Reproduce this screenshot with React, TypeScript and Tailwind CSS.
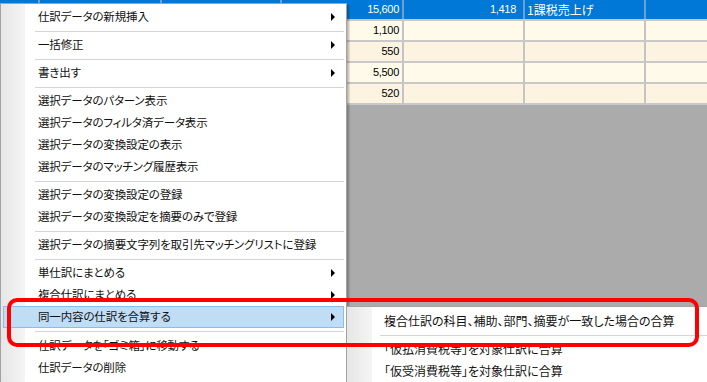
import React from "react";

type Entry = { t: string; arrow?: boolean; hl?: boolean } | "sep" | "sep7";

const items: Entry[] = [
  { t: "仕訳データの新規挿入", arrow: true },
  "sep",
  { t: "一括修正", arrow: true },
  "sep",
  { t: "書き出す", arrow: true },
  "sep",
  { t: "選択データのパターン表示" },
  { t: "選択データのフィルタ済データ表示" },
  { t: "選択データの変換設定の表示" },
  { t: "選択データのマッチング履歴表示" },
  "sep",
  { t: "選択データの変換設定の登録" },
  { t: "選択データの変換設定を摘要のみで登録" },
  "sep",
  { t: "選択データの摘要文字列を取引先マッチングリストに登録" },
  "sep",
  { t: "単仕訳にまとめる", arrow: true },
  { t: "複合仕訳にまとめる", arrow: true },
  { t: "同一内容の仕訳を合算する", arrow: true, hl: true },
  "sep7",
  { t: "仕訳データを「ゴミ箱」に移動する" },
  { t: "仕訳データの削除" },
];

const subItems: Entry[] = [
  { t: "複合仕訳の科目、補助、部門、摘要が一致した場合の合算" },
  "sep",
  { t: "「仮払消費税等」を対象仕訳に合算" },
  { t: "「仮受消費税等」を対象仕訳に合算" },
];

const rows = [
  { a: "15,600", b: "1,418", c: "1課税売上げ", sel: true },
  { a: "1,100", b: "", c: "" },
  { a: "550", b: "", c: "" },
  { a: "5,500", b: "", c: "" },
  { a: "520", b: "", c: "" },
];

function Arrow() {
  return <span className="w-0 h-0 border-y-[4px] border-y-transparent border-l-[4px] border-l-black" />;
}

function Row({ r, i }: { r: (typeof rows)[number]; i: number }) {
  const bg = r.sel ? "bg-[#0078d7] text-white" : i % 2 === 1 ? "bg-[#fffaea] text-black" : "bg-[#fdf3e1] text-black";
  const line = r.sel ? "border-r-[#6f9fcf]" : "border-r-[#c4c4c4]";
  const cell = `h-[19px] border-r-2 ${line} flex items-center shrink-0`;
  return (
    <div className={`flex h-[21px] border-b-2 border-b-[#c8c8c8] ${bg}`}>
      <div className={`${cell} w-[40px]`} />
      <div className={`${cell} w-[122px]`} />
      <div className={`${cell} w-[120px]`} />
      <div className={`${cell} w-[122px] justify-end pr-[3px] font-['Liberation_Sans',sans-serif] text-[11px] tracking-[-0.3px]`}>{r.a}</div>
      <div className={`${cell} w-[121px] justify-end pr-[7px] font-['Liberation_Sans',sans-serif] text-[11px] tracking-[-0.3px]`}>{r.b}</div>
      <div className={`${cell} w-[121px] pl-[2px] text-[12px]`}>{r.c}</div>
      <div className={`${cell} w-[121px]`} />
    </div>
  );
}

function MenuList({ list, textPad, sepPad }: { list: Entry[]; textPad: string; sepPad: string }) {
  return (
    <>
      {list.map((e, i) => {
        if (e === "sep" || e === "sep7") {
          return (
            <div key={i} className={`${e === "sep7" ? "h-[7px]" : "h-[6px]"} flex items-center ${sepPad}`}>
              <div className="h-px w-full bg-[#d5d5d5]" />
            </div>
          );
        }
        return (
          <div
            key={i}
            className={`h-[22px] flex items-center justify-between border ${
              e.hl ? "bg-[#c0ddf6] border-[#8abdee]" : "border-transparent"
            } ${textPad} pr-[8px]`}
          >
            <span className="leading-none whitespace-nowrap">{e.t}</span>
            {e.arrow ? <Arrow /> : null}
          </div>
        );
      })}
    </>
  );
}

export default function App() {
  return (
    <div className="relative w-[707px] h-[382px] overflow-hidden bg-[#ababab] font-['Noto_Sans_CJK_JP',sans-serif] [font-feature-settings:'palt'] text-[12px] text-[#111]">
      {/* underlying grid */}
      <div className="flex flex-col">
        {rows.map((r, i) => (
          <Row key={i} r={r} i={i} />
        ))}
      </div>

      {/* context menu */}
      <div className="absolute left-0 top-[3px] w-[347px] h-[390px] border border-[#a3a3a3] bg-white bg-[linear-gradient(to_right,#e6e6e6,#f5f5f5_24px,#ffffff_24px)] p-[2px] shadow-[2px_2px_2px_rgba(0,0,0,0.28)] text-[11.5px] tracking-[-0.15px]">
        <MenuList list={items} textPad="pl-[34px]" sepPad="pl-[32px]" />
      </div>

      {/* submenu */}
      <div className="absolute left-[346px] top-[306px] w-[420px] h-[90px] border border-[#a3a3a3] bg-white bg-[linear-gradient(to_right,#e6e6e6,#f5f5f5_25px,#ffffff_25px)] pt-[3px] pl-[1px]">
        <MenuList list={subItems} textPad="pl-[35px]" sepPad="pl-[32px]" />
      </div>

      {/* annotation */}
      <div className="absolute left-[7px] top-[298px] w-[692px] h-[49px] border-4 border-[#ff0000] rounded-[10px]" />
    </div>
  );
}
